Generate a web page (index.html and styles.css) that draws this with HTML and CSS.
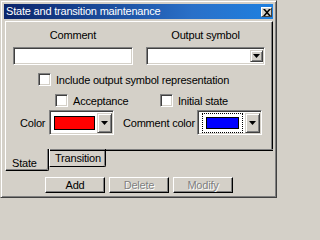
FILE: index.html
```html
<!DOCTYPE html>
<html>
<head>
<meta charset="utf-8">
<link rel="stylesheet" href="styles.css">
</head>
<body>
<div class="window">
  <div class="titlebar">
    <span class="title">State and transition maintenance</span>
    <span class="close"><svg width="8" height="7" viewBox="0 0 8 7"><path d="M0 0h2l2 2.3L6 0h2L5 3.5 8 7H6L4 4.7 2 7H0l3-3.5z" fill="#000"/></svg></span>
  </div>
  <div class="client">
    <div class="panel">
      <div class="fields">
        <div class="field f-comment">
          <div class="label">Comment</div>
          <div class="edit sunken"></div>
        </div>
        <div class="field f-output">
          <div class="label">Output symbol</div>
          <div class="combo sunken">
            <div class="combo-text"></div>
            <div class="dd-btn"><svg width="7" height="4" viewBox="0 0 7 4"><path d="M0 0h7L3.5 4z" fill="#000"/></svg></div>
          </div>
        </div>
      </div>
      <div class="check-row r-include">
        <span class="cb"></span><span>Include output symbol representation</span>
      </div>
      <div class="check-row r-two">
        <div class="check-item ci-accept"><span class="cb"></span><span>Acceptance</span></div>
        <div class="check-item"><span class="cb"></span><span>Initial state</span></div>
      </div>
      <div class="color-row">
        <span class="clabel cl-color">Color</span>
        <div class="ccombo sunken">
          <div class="swatch-area"><div class="swatch red"></div></div>
          <div class="dd-btn"><svg width="7" height="4" viewBox="0 0 7 4"><path d="M0 0h7L3.5 4z" fill="#000"/></svg></div>
        </div>
        <span class="clabel cl-comment">Comment color</span>
        <div class="ccombo sunken">
          <div class="swatch-area"><div class="focus"><div class="swatch blue"></div></div></div>
          <div class="dd-btn"><svg width="7" height="4" viewBox="0 0 7 4"><path d="M0 0h7L3.5 4z" fill="#000"/></svg></div>
        </div>
      </div>
    </div>
    <div class="tabs">
      <div class="tab tab-active"><span>State</span></div>
      <div class="tab tab-inactive"><span>Transition</span></div>
      <div class="tab-fill"></div>
    </div>
    <div class="buttons">
      <div class="btn">Add</div>
      <div class="btn disabled">Delete</div>
      <div class="btn disabled">Modify</div>
    </div>
  </div>
</div>
</body>
</html>
```

FILE: styles.css
```css
* { box-sizing: border-box; }
html, body {
  margin: 0;
  padding: 0;
  background: #d4d0c8;
  font-family: "Liberation Sans", Arial, sans-serif;
  font-size: 11px;
  letter-spacing: -0.2px;
  color: #000;
}
.window {
  width: 277px;
  height: 198px;
  border: 1px solid;
  border-color: #d4d0c8 #404040 #404040 #d4d0c8;
  box-shadow: inset 1px 1px #fff, inset -1px -1px #808080;
  padding: 3px 3px 3px 3px;
  display: flex;
  flex-direction: column;
  background: #d4d0c8;
}
.titlebar {
  height: 15px;
  background: linear-gradient(to right, #0a246a 0%, #2a70c8 70%, #1e80e0 100%);
  display: flex;
  align-items: center;
  justify-content: space-between;
  padding-left: 2px;
  padding-right: 1px;
}
.title {
  color: #fff;
  font-size: 11px;
  line-height: 13px;
  white-space: nowrap;
}
.close {
  width: 11px;
  height: 10px;
  background: #d4d0c8;
  border: 1px solid;
  border-color: #fff #404040 #404040 #fff;
  display: flex;
  align-items: center;
  justify-content: center;
  margin-top: 1px;
}
.close svg { display: block; }
.client {
  flex: 1;
  display: flex;
  flex-direction: column;
  padding-top: 2px;
}
.panel {
  margin-left: 1px;
  height: 128px;
  border-left: 1px solid #fff;
  border-top: 1px solid #fff;
  border-right: 1px solid #000;
  box-shadow: inset -1px 0 #808080;
  padding-top: 7px;
}
.fields {
  display: flex;
  padding-left: 7px;
  gap: 13px;
}
.field {
  display: flex;
  flex-direction: column;
  align-items: center;
}
.f-comment { width: 120px; }
.f-output { width: 119px; }
.label {
  line-height: 13px;
  height: 13px;
  white-space: nowrap;
}
.sunken {
  border: 1px solid;
  border-color: #808080 #fff #fff #808080;
  box-shadow: inset 1px 1px #404040, inset -1px -1px #d4d0c8;
  background: #fff;
}
.edit, .combo {
  width: 100%;
  height: 18px;
  margin-top: 5px;
}
.combo {
  display: flex;
  padding: 2px 1px 2px 2px;
}
.combo-text { flex: 1; }
.dd-btn {
  width: 13px;
  background: #d4d0c8;
  border: 1px solid;
  border-color: #d4d0c8 #404040 #404040 #d4d0c8;
  box-shadow: inset 1px 1px #fff, inset -1px -1px #808080;
  display: flex;
  align-items: center;
  justify-content: center;
}
.dd-btn svg { display: block; }
.check-row {
  display: flex;
  align-items: center;
  height: 13px;
  white-space: nowrap;
}
.r-include {
  margin-top: 8px;
  padding-left: 32px;
}
.r-two {
  margin-top: 8px;
  padding-left: 49px;
}
.check-item {
  display: flex;
  align-items: center;
}
.ci-accept { width: 105px; }
.cb {
  width: 13px;
  height: 13px;
  flex: none;
  background: #fff;
  border: 1px solid;
  border-color: #808080 #fff #fff #808080;
  box-shadow: inset 1px 1px #404040, inset -1px -1px #d4d0c8;
  margin-right: 5px;
}
.color-row {
  display: flex;
  align-items: center;
  margin-top: 3px;
  padding-left: 14px;
  height: 25px;
}
.clabel { white-space: nowrap; }
.cl-color { width: 29px; }
.cl-comment { width: 74px; margin-left: 9px; }
.ccombo {
  width: 65px;
  height: 25px;
  display: flex;
  padding: 2px 1px 1px 2px;
}
.ccombo .dd-btn { width: 15px; }
.swatch-area {
  flex: 1;
  display: flex;
  flex-direction: column;
  justify-content: center;
  padding: 0 2px;
}
.swatch {
  height: 14px;
  border: 1px solid #000;
}
.red { background: #ff0000; }
.blue { background: #0000ff; }
.focus {
  border: 1px dotted #000;
  padding: 3px 3px;
  height: 20px;
  display: flex;
  flex-direction: column;
  justify-content: center;
}
.focus .swatch { height: 13px; }
.tabs {
  display: flex;
  margin-left: 1px;
  height: 22px;
}
.tab {
  display: flex;
  white-space: nowrap;
}
.tab-active {
  width: 44px;
  height: 22px;
  border-left: 1px solid #fff;
  border-right: 1px solid #000;
  border-bottom: 1px solid #000;
  box-shadow: inset -1px -1px #808080;
  border-bottom-right-radius: 2px;
  padding: 8px 0 0 6px;
  line-height: 13px;
}
.tab-inactive {
  width: 57px;
  height: 18px;
  border-left: 1px solid #fff;
  border-right: 1px solid #000;
  border-bottom: 1px solid #000;
  box-shadow: inset 0 1px #808080, inset 0 2px #000, inset -1px 0 #808080;
  border-bottom-right-radius: 2px;
  padding: 3px 0 0 5px;
  line-height: 13px;
}
.tab-fill {
  flex: 1;
  height: 2px;
  box-shadow: inset 0 1px #808080, inset 0 2px #000;
}
.buttons {
  display: flex;
  gap: 4px;
  margin-top: 6px;
  padding-left: 41px;
}
.btn {
  width: 60px;
  height: 16px;
  border: 1px solid;
  border-color: #fff #000 #000 #fff;
  box-shadow: inset -1px -1px #808080;
  display: flex;
  align-items: center;
  justify-content: center;
  line-height: 13px;
}
.disabled {
  color: #808080;
  text-shadow: 1px 1px #fff;
}
```
